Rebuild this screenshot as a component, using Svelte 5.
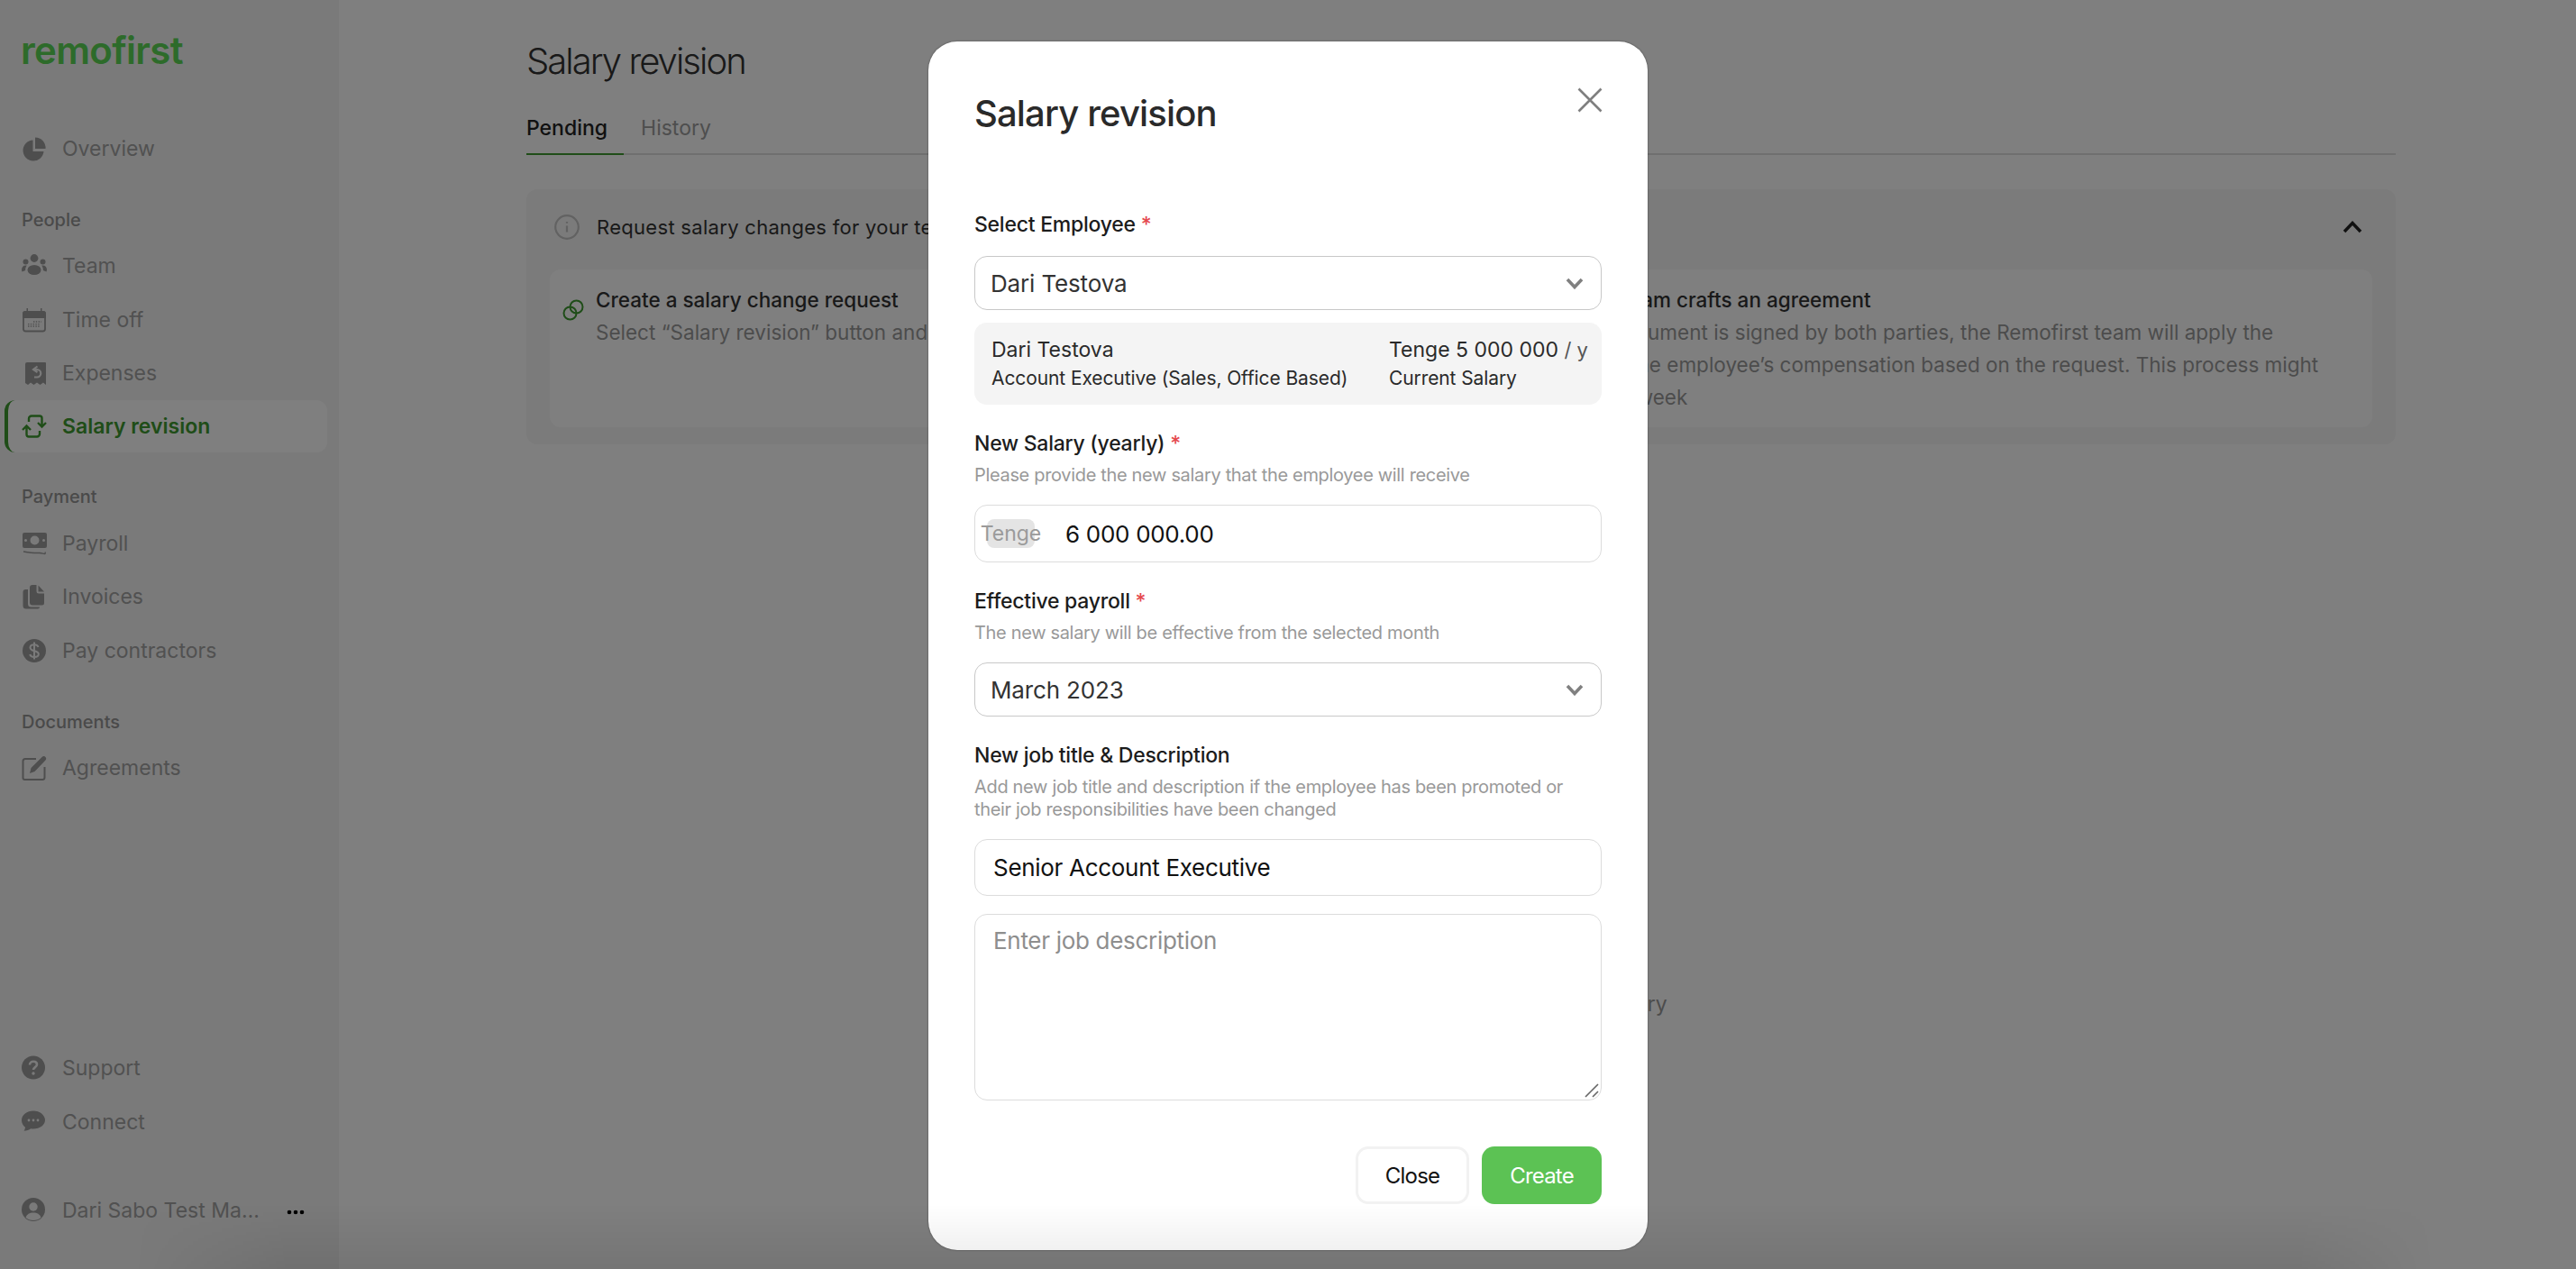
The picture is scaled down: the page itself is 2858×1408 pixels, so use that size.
<script>
  const groups = [
    { items: [{ icon: 'overview', label: 'Overview' }] },
    {
      title: 'People',
      items: [
        { icon: 'team', label: 'Team' },
        { icon: 'calendar', label: 'Time off' },
        { icon: 'receipt', label: 'Expenses' },
        { icon: 'revision', label: 'Salary revision', active: true }
      ]
    },
    {
      title: 'Payment',
      items: [
        { icon: 'payroll', label: 'Payroll' },
        { icon: 'files', label: 'Invoices' },
        { icon: 'dollar', label: 'Pay contractors' }
      ]
    },
    { title: 'Documents', items: [{ icon: 'edit', label: 'Agreements' }] }
  ];

  const bottomItems = [
    { icon: 'help', label: 'Support' },
    { icon: 'chat', label: 'Connect' }
  ];
</script>

{#snippet icon(name)}
  <svg class="nav-icon" viewBox="0 0 28 28" aria-hidden="true">
    {#if name === 'overview'}
      <path d="M12.5 4.5a11.5 11.5 0 1 0 12 12.5h-12z" />
      <path d="M15 1.5a11.5 11.5 0 0 1 11.5 12.5H15z" />
    {:else if name === 'team'}
      <circle cx="14" cy="5.500" r="4.400" />
      <circle cx="4.500" cy="9.500" r="3" />
      <circle cx="23.500" cy="9.500" r="3" />
      <ellipse cx="14" cy="18.500" rx="7.500" ry="5.500" />
      <path d="M0 18.500c0-3 1.500-5 4.500-5 .8 0 1.200.2 1.200.2-1 1.200-1.700 3-1.500 5.300L.5 20.500zM28 18.500c0-3-1.500-5-4.500-5-.8 0-1.200.2-1.200.2 1 1.200 1.700 3 1.500 5.300l3.700 1.500z" />
    {:else if name === 'calendar'}
      <path d="M7 1v3h14V1h1.500v3H24a3 3 0 0 1 3 3v5H1V7a3 3 0 0 1 3-3h1.500V1z" />
      <rect class="stroked" x="2" y="5" width="24" height="21.500" rx="2.500" fill="none" stroke-width="1.800" />
      <path class="stroked" stroke-width="1.300" stroke-dasharray="1.400 1.400" d="M7 21h14M7 18.600h14M13 16h9" fill="none" />
    {:else if name === 'receipt'}
      <path d="M6 2h20a1 1 0 0 1 1 1v24l-3-2.500-3.500 2.500-3.500-2.500-3.500 2.500-3.500-2.500L7 27l-3-2V4a2 2 0 0 1 2-2z" />
      <path class="cut" d="M17.500 6.500L13 10l4.500 3M13.500 10H17a4 4 0 0 1 0 8.500h-3" fill="none" stroke-width="2.200" />
    {:else if name === 'revision'}
      <path class="stroked" fill="none" stroke-width="2.400" d="M8 9V5.500a3 3 0 0 1 3-3h9A2.500 2.500 0 0 1 22.500 5v9M27 10l-4.500 4.500L18 10M20 19v3.500a3 3 0 0 1-3 3H8A2.500 2.500 0 0 1 5.500 23v-9M1 18l4.500-4.500L10 18" />
    {:else if name === 'payroll'}
      <path fill-rule="evenodd" d="M3 2h23a2 2 0 0 1 2 2v13a2 2 0 0 1-2 2H3a2 2 0 0 1-2-2V4a2 2 0 0 1 2-2zm11.500 3.500a5 5 0 1 0 0 10 5 5 0 0 0 0-10zM4.500 9a1.500 1.500 0 1 0 0 3 1.500 1.500 0 0 0 0-3zm20 0a1.500 1.500 0 1 0 0 3 1.500 1.500 0 0 0 0-3z" />
      <path class="stroked" fill="none" stroke-width="1.500" d="M2 23c6 1 12 2 17 1.500 3-.3 5 1 6.500 1 .7 0 .8-1 .8-2" />
    {:else if name === 'files'}
      <path d="M12 1h4.500v7a2.500 2.500 0 0 0 2.500 2.500h6V21a2.500 2.500 0 0 1-2.500 2.500H12A3 3 0 0 1 9 20.500V4a3 3 0 0 1 3-3zM18.500 1.500l6.500 7h-6.500z" />
      <path d="M7 6v16a3.500 3.500 0 0 0 3.500 3.500H20a2 2 0 0 1-2 2H5a3.500 3.500 0 0 1-3.500-3.500V9a3 3 0 0 1 3-3z" />
    {:else if name === 'dollar'}
      <circle cx="14" cy="14" r="13" />
      <path class="cut" fill="none" stroke-width="2" d="M18.500 10c-.5-1.800-2.300-2.800-4.500-2.800-2.500 0-4.500 1.200-4.500 3.300 0 5 9.300 2.500 9.300 7.300 0 2.200-2.300 3.200-4.800 3.200s-4.300-1.200-4.800-3M14 4.500v19" />
    {:else if name === 'edit'}
      <path class="stroked" fill="none" stroke-width="2" d="M16 4H4a2.500 2.500 0 0 0-2.500 2.500V25a2 2 0 0 0 2 2H23a2.500 2.500 0 0 0 2.500-2.500V13" />
      <path d="M9 20l1.500-6 12-12c1.500-1.400 3-1.200 4 0s1 2.500-.5 4L14.500 18z" />
    {:else if name === 'help'}
      <circle cx="13" cy="13.500" r="13" />
      <path class="cut" fill="none" stroke-width="2.600" d="M9 10.500c0-2.500 2-3.700 4-3.700 2.300 0 4 1.300 4 3.300 0 3-4 3-4 5.900" />
      <circle class="dot" cx="13" cy="20" r="1.700" />
    {:else if name === 'chat'}
      <path d="M13 1.500C6 1.500 0 6 0 12c0 3.200 1.500 5.800 4 7.800-.2 2-.9 3.200-1.400 3.900 2.700 0 6-1.300 7.500-2.500 1 .2 2 .3 2.900.3 7.200 0 13-4.300 13-9.700S20.200 1.500 13 1.500z" />
      <circle class="dot" cx="8" cy="12" r="1.400" />
      <circle class="dot" cx="13" cy="12" r="1.400" />
      <circle class="dot" cx="18" cy="12" r="1.400" />
    {:else if name === 'user'}
      <circle cx="13" cy="13" r="13" />
      <circle class="dot" cx="13" cy="10" r="4.700" />
      <path class="dot" d="M4.500 22c1-3.700 4.500-5.500 8.500-5.500s7.500 1.800 8.500 5.500c-2.200 1.900-5.200 3-8.500 3s-6.300-1.100-8.500-3z" />
    {/if}
  </svg>
{/snippet}

{#snippet chevronDown()}
  <svg class="chevron" viewBox="0 0 20 14" aria-hidden="true">
    <path d="M2 3l8 8.500L18 3" />
  </svg>
{/snippet}

<div class="page">
  <aside class="sidebar">
    <div class="logo">remofirst</div>

    {#each groups as group}
      <nav class="group">
        {#if group.title}
          <div class="group-title">{group.title}</div>
        {/if}
        {#each group.items as item}
          <div class="nav-item" class:active={item.active}>
            {@render icon(item.icon)}
            <span>{item.label}</span>
          </div>
        {/each}
      </nav>
    {/each}

    <div class="bottom">
      {#each bottomItems as item}
        <div class="nav-item">
          {@render icon(item.icon)}
          <span>{item.label}</span>
        </div>
      {/each}
      <div class="nav-item account">
        {@render icon('user')}
        <span class="account-name">Dari Sabo Test Manager</span>
        <svg class="dots" viewBox="0 0 20 6" aria-hidden="true">
          <circle cx="3" cy="3" r="2.300" />
          <circle cx="10" cy="3" r="2.300" />
          <circle cx="17" cy="3" r="2.300" />
        </svg>
      </div>
    </div>
  </aside>

  <main class="content">
    <h1>Salary revision</h1>
    <div class="tabs">
      <div class="tab selected">Pending</div>
      <div class="tab">History</div>
    </div>

    <section class="howto">
      <header class="howto-head">
        <svg class="info" viewBox="0 0 28 28" aria-hidden="true">
          <circle cx="14" cy="14" r="12.800" />
          <path d="M14 12.500v7M14 8v1.800" />
        </svg>
        <span>Request salary changes for your team members in two simple steps</span>
        <svg class="chevron-up" viewBox="0 0 22 14" aria-hidden="true">
          <path d="M2 12l9-9.500 9 9.500" />
        </svg>
      </header>
      <div class="steps">
        <div class="step">
          <svg class="link" viewBox="0 0 24 24" aria-hidden="true">
            <circle cx="15.500" cy="8.500" r="7" />
            <circle cx="8.500" cy="15.500" r="7" />
          </svg>
          <div>
            <div class="step-title">Create a salary change request</div>
            <p>Select “Salary revision” button and fill in the form with the new salary of the employee</p>
          </div>
        </div>
        <div class="step">
          <svg class="link" viewBox="0 0 24 24" aria-hidden="true">
            <circle cx="15.500" cy="8.500" r="7" />
            <circle cx="8.500" cy="15.500" r="7" />
          </svg>
          <div>
            <div class="step-title">Remofirst Team crafts an agreement</div>
            <p>Once the document is signed by both parties, the Remofirst team will apply the changes to the employee’s compensation based on the request. This process might take up to a week</p>
          </div>
        </div>
      </div>
    </section>

    <p class="empty">You have no pending requests for a salary</p>
  </main>

  <div class="overlay">
    <div class="modal">
      <button class="close-x" aria-label="Close">
        <svg viewBox="0 0 28 28" aria-hidden="true">
          <path d="M1.500 1.500l25 25M26.500 1.500l-25 25" />
        </svg>
      </button>
      <h2>Salary revision</h2>

      <div class="label first">Select Employee <em>*</em></div>
      <div class="select">
        <span>Dari Testova</span>
        {@render chevronDown()}
      </div>
      <div class="employee">
        <div>
          <div class="employee-main">Dari Testova</div>
          <div class="employee-sub">Account Executive (Sales, Office Based)</div>
        </div>
        <div class="employee-right">
          <div class="employee-main">Tenge 5 000 000 <i>/ y</i></div>
          <div class="employee-sub">Current Salary</div>
        </div>
      </div>

      <div class="label">New Salary (yearly) <em>*</em></div>
      <div class="hint">Please provide the new salary that the employee will receive</div>
      <div class="money">
        <span class="currency">Tenge</span>
        <input value="6 000 000.00" />
      </div>

      <div class="label">Effective payroll <em>*</em></div>
      <div class="hint">The new salary will be effective from the selected month</div>
      <div class="select">
        <span>March 2023</span>
        {@render chevronDown()}
      </div>

      <div class="label">New job title &amp; Description</div>
      <div class="hint double">Add new job title and description if the employee has been promoted or their job responsibilities have been changed</div>
      <input class="text-input" value="Senior Account Executive" />
      <div class="area">
        <textarea placeholder="Enter job description"></textarea>
        <svg class="grip" viewBox="0 0 16 16" aria-hidden="true">
          <path d="M1 15L15 1M9 15l6-6" />
        </svg>
      </div>

      <div class="actions">
        <button class="btn ghost">Close</button>
        <button class="btn primary">Create</button>
      </div>
    </div>
  </div>

  <div class="bottom-fade"></div>
</div>

<style>
  :global(body) {
    margin: 0;
    background: #fff;
  }

  .page {
    position: relative;
    display: flex;
    height: 1408px;
    overflow: hidden;
    font-family: Inter, "Liberation Sans", sans-serif;
    color: #222;
  }

  /* sidebar */
  .sidebar {
    width: 376px;
    flex: none;
    display: flex;
    flex-direction: column;
    box-sizing: border-box;
    padding-top: 34px;
    background: #f5f5f5;
  }

  .logo {
    margin-left: 23px;
    font-size: 42px;
    line-height: 44px;
    font-weight: 600;
    color: #5bd655;
    letter-spacing: -0.700px;
  }

  .group {
    display: flex;
    flex-direction: column;
  }

  .group:first-of-type {
    margin-top: 57px;
  }

  .group + .group {
    margin-top: 36px;
  }

  .group-title {
    margin-left: 24px;
    margin-bottom: 9px;
    font-size: 20px;
    line-height: 26px;
    font-weight: 500;
    color: #949494;
  }

  .nav-item {
    display: flex;
    align-items: center;
    height: 59.500px;
    margin-left: 24px;
    font-size: 23px;
    color: #a2a2a2;
    fill: #9c9c9c;
  }

  .nav-item span {
    white-space: nowrap;
  }

  .nav-item.active {
    box-sizing: border-box;
    margin: 0 13px 0 5px;
    padding-left: 15px;
    height: 58px;
    background: #fff;
    border-left: 4px solid #3e9a30;
    border-radius: 12px;
    font-weight: 600;
    color: #3e9a30;
    fill: #3e9a30;
  }

  .nav-icon {
    width: 28px;
    height: 28px;
    flex: none;
    margin-right: 17px;
  }

  .nav-icon .stroked {
    stroke: #9c9c9c;
  }

  .nav-item.active .nav-icon .stroked {
    stroke: #3e9a30;
  }

  .nav-icon .cut {
    stroke: #f5f5f5;
  }

  .nav-icon .dot {
    fill: #f5f5f5;
  }

  .bottom {
    margin-top: auto;
    padding-bottom: 35px;
  }

  .account {
    margin-top: 39px;
  }

  .account-name {
    width: 224px;
    overflow: hidden;
    text-overflow: ellipsis;
  }

  .dots {
    width: 20px;
    height: 6px;
    margin: 4px 0 0 25px;
    fill: #000;
  }

  /* main */
  .content {
    flex: 1;
    min-width: 0;
    padding: 40px 200px 0 208px;
  }

  h1 {
    margin: 0;
    font-size: 40px;
    line-height: 56px;
    font-weight: 300;
    letter-spacing: -1.950px;
    color: #333;
  }

  .tabs {
    display: flex;
    gap: 19px;
    margin-top: 26px;
    border-bottom: 2px solid #dedede;
    height: 48px;
  }

  .tab {
    padding-right: 18px;
    height: 48px;
    font-size: 23px;
    line-height: 40px;
    color: #9c9c9c;
  }

  .tab.selected {
    color: #222;
    font-weight: 500;
    border-bottom: 2px solid #3e9a30;
  }

  .howto {
    margin-top: 38px;
    padding: 0 26px 19px;
    background: #f6f6f6;
    border-radius: 12px;
  }

  .howto-head {
    display: flex;
    align-items: center;
    height: 83px;
    padding-bottom: 6px;
    font-size: 22px;
    letter-spacing: 0.3px;
    color: #333;
  }

  .info {
    width: 28px;
    height: 28px;
    margin: 0 19px 0 5px;
    fill: none;
    stroke: #c4c4c4;
    stroke-width: 2.200;
  }

  .chevron-up {
    width: 22px;
    height: 14px;
    margin-left: auto;
    margin-right: 11px;
    fill: none;
    stroke: #222;
    stroke-width: 3.500;
  }

  .steps {
    display: grid;
    grid-template-columns: 1fr 1fr;
    gap: 16px;
  }

  .step {
    display: flex;
    gap: 13px;
    height: 175px;
    box-sizing: border-box;
    padding: 19px 30px 0 14px;
    background: #fff;
    border-radius: 12px;
  }

  .step + .step {
    padding-left: 19px;
    padding-right: 25px;
  }

  .link {
    width: 24px;
    height: 24px;
    flex: none;
    margin-top: 14px;
    fill: none;
    stroke: #3e9a30;
    stroke-width: 2;
  }

  .step-title {
    font-size: 22.500px;
    line-height: 30px;
    font-weight: 500;
    color: #333;
  }

  .step p {
    margin: 3px 0 0;
    font-size: 22.500px;
    line-height: 36px;
    color: #999;
  }

  .empty {
    margin: 606px 0 0;
    font-size: 23px;
    line-height: 30px;
    text-align: center;
    color: #999;
  }

  /* modal */
  .overlay {
    position: absolute;
    inset: 0;
    display: flex;
    justify-content: center;
    align-items: flex-start;
    background: rgba(0, 0, 0, 0.5);
  }

  .modal {
    position: relative;
    width: 798px;
    box-sizing: border-box;
    margin-top: 46px;
    padding: 56px 51px 51px;
    background: #fff;
    border-radius: 32px;
    box-shadow: 0 0 2px rgba(0, 0, 0, 0.5);
  }

  .close-x {
    position: absolute;
    top: 50px;
    right: 48px;
    width: 30px;
    height: 30px;
    padding: 0;
    border: 0;
    background: none;
  }

  .close-x svg {
    display: block;
    width: 28px;
    height: 28px;
    fill: none;
    stroke: #7f7f7f;
    stroke-width: 2.600;
  }

  h2 {
    margin: 0;
    font-size: 40px;
    line-height: 48px;
    font-weight: 500;
    letter-spacing: -0.850px;
    color: #2a2a2a;
  }

  .label {
    margin-top: 28px;
    font-size: 23px;
    line-height: 30px;
    font-weight: 500;
    letter-spacing: -0.250px;
    color: #1c1c1c;
  }

  .label.first {
    margin-top: 84px;
    margin-bottom: 20px;
  }

  .label em {
    font-style: normal;
    color: #e5484d;
  }

  .hint {
    margin-top: 6px;
    margin-bottom: 19px;
    font-size: 20px;
    line-height: 28px;
    letter-spacing: -0.330px;
    color: #999;
  }

  .hint.double {
    line-height: 25px;
    margin-top: 8px;
    margin-bottom: 20px;
  }

  .select {
    display: flex;
    align-items: center;
    justify-content: space-between;
    box-sizing: border-box;
    height: 60px;
    padding: 0 19px 0 17px;
    border: 1px solid #c8c8c8;
    border-radius: 14px;
    font-size: 26px;
    letter-spacing: -0.150px;
    color: #333;
  }

  .chevron {
    width: 20px;
    height: 14px;
    fill: none;
    stroke: #808080;
    stroke-width: 3.600;
  }

  .employee {
    display: flex;
    justify-content: space-between;
    box-sizing: border-box;
    height: 91px;
    margin-top: 14px;
    padding: 14px 19px 0;
    background: #f4f4f4;
    border-radius: 14px;
  }

  .employee-right {
    width: 217px;
  }

  .employee-main {
    font-size: 23px;
    line-height: 32px;
    color: #2a2a2a;
    white-space: nowrap;
  }

  .employee-main i {
    font-style: normal;
    font-size: 22px;
    color: #555;
  }

  .employee-sub {
    font-size: 21px;
    line-height: 32px;
    letter-spacing: -0.100px;
    color: #2a2a2a;
    white-space: nowrap;
  }

  .money {
    display: flex;
    align-items: center;
    box-sizing: border-box;
    height: 64px;
    padding-left: 13px;
    border: 1px solid #dcdcdc;
    border-radius: 14px;
  }

  .currency {
    display: flex;
    justify-content: center;
    width: 53px;
    height: 32px;
    margin-right: 34px;
    flex: none;
    font-size: 23px;
    line-height: 32px;
    color: #9a9a9a;
    background: #e4e4e4;
    border-radius: 8px;
  }

  .money input,
  .text-input,
  textarea {
    font-family: inherit;
    font-size: 26px;
    letter-spacing: -0.300px;
    color: #111;
    outline: none;
    background: none;
  }

  .money input {
    flex: 1;
    min-width: 0;
    padding: 0;
    border: 0;
  }

  .text-input,
  textarea {
    display: block;
    width: 100%;
    box-sizing: border-box;
    padding: 0 20px;
    border: 1px solid #dcdcdc;
    border-radius: 14px;
  }

  .text-input {
    height: 63px;
  }

  .area {
    position: relative;
    margin-top: 20px;
  }

  textarea {
    height: 207px;
    padding-top: 13px;
    resize: none;
  }

  textarea::placeholder {
    color: #8e8e8e;
    opacity: 1;
  }

  .grip {
    position: absolute;
    right: 3px;
    bottom: 3px;
    width: 16px;
    height: 16px;
    fill: none;
    stroke: #666;
    stroke-width: 1.600;
  }

  .actions {
    display: flex;
    justify-content: flex-end;
    gap: 14px;
    margin-top: 51px;
  }

  .btn {
    box-sizing: border-box;
    height: 64px;
    border-radius: 14px;
    font-family: inherit;
    font-size: 24px;
    letter-spacing: -0.800px;
  }

  .btn.ghost {
    width: 126px;
    background: #fff;
    border: 3px solid #f2f2f2;
    color: #111;
  }

  .btn.primary {
    width: 133px;
    background: #5cc254;
    border: 0;
    color: #fff;
  }

  .bottom-fade {
    position: absolute;
    left: 0;
    right: 0;
    bottom: 0;
    height: 72px;
    background: linear-gradient(rgba(0, 0, 0, 0), rgba(0, 0, 0, 0.08));
    mask-image: linear-gradient(to right, transparent 150px, #000 320px, #000 2550px, transparent 2700px);
    pointer-events: none;
  }
</style>
